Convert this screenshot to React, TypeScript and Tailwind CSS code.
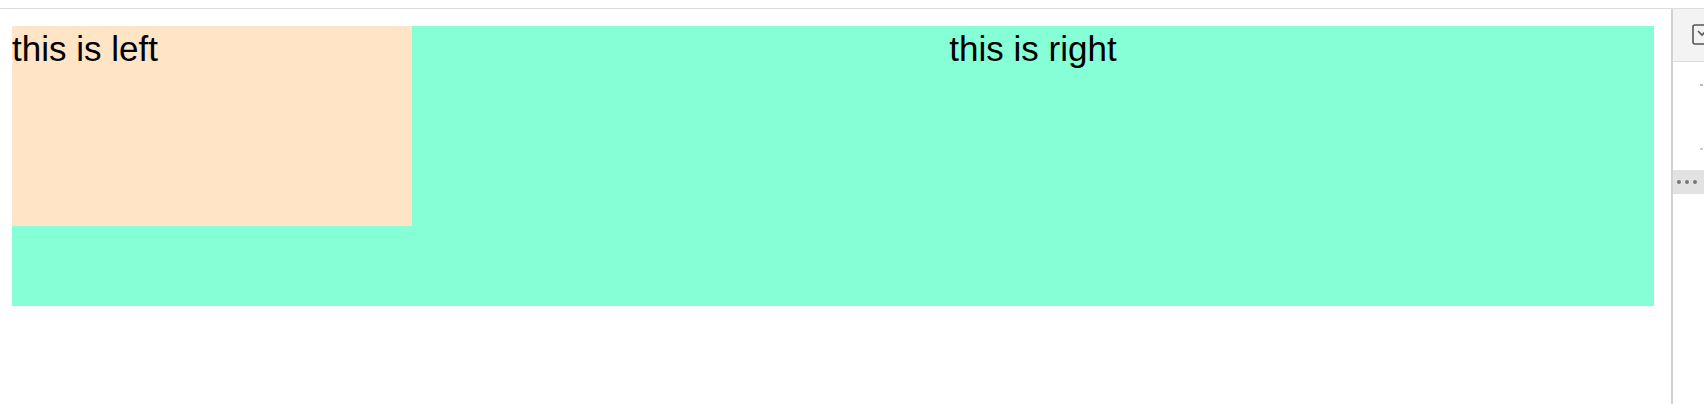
export default function App() {
  return (
    <div className="h-[404px] w-[1704px] overflow-hidden bg-white font-['Liberation_Sans',Arial,sans-serif] text-black">
      <div className="h-[9px] border-b border-[#dcdcdc] bg-white" />
      <div className="flex h-[395px]">
        <main className="flex-1 pl-[12px] pr-[17px] pt-[17px]">
          <div className="flex h-[280px] bg-[#86ffd6]">
            <div className="h-[200px] w-[400px] bg-[#ffe4c6] text-[35px] leading-[46px]">this is left</div>
            <div className="flex-1 text-center text-[35px] leading-[46px]">this is right</div>
          </div>
        </main>
        <aside className="w-[33px] shrink-0 overflow-hidden border-l-2 border-[#d2d2d2] bg-white">
          <div className="flex h-[53px] items-center border-b border-[#dedede] bg-[#f3f3f3] pl-[19px]">
            <svg className="shrink-0" width="22" height="22" viewBox="0 0 22 22" fill="none" stroke="#555" strokeWidth="1.6">
              <rect x="1" y="1" width="19" height="19" rx="2" />
              <path d="M6 7l4 4 4-4" />
            </svg>
          </div>
          <div className="flex h-[30px] items-end justify-end pr-[1px]">
            <span className="mb-[6px] h-[2px] w-[3px] bg-[#bbb]" />
          </div>
          <div className="flex h-[78px] items-end justify-end pr-[1px]">
            <span className="mb-[20px] h-[2px] w-[3px] bg-[#ccc]" />
          </div>
          <div className="flex h-[24px] items-center gap-[4px] bg-[#e2e2e2] pl-[4px]">
            <span className="h-[4px] w-[4px] rounded-full bg-[#777]" />
            <span className="h-[4px] w-[4px] rounded-full bg-[#777]" />
            <span className="h-[4px] w-[4px] rounded-full bg-[#777]" />
          </div>
        </aside>
      </div>
    </div>
  );
}
